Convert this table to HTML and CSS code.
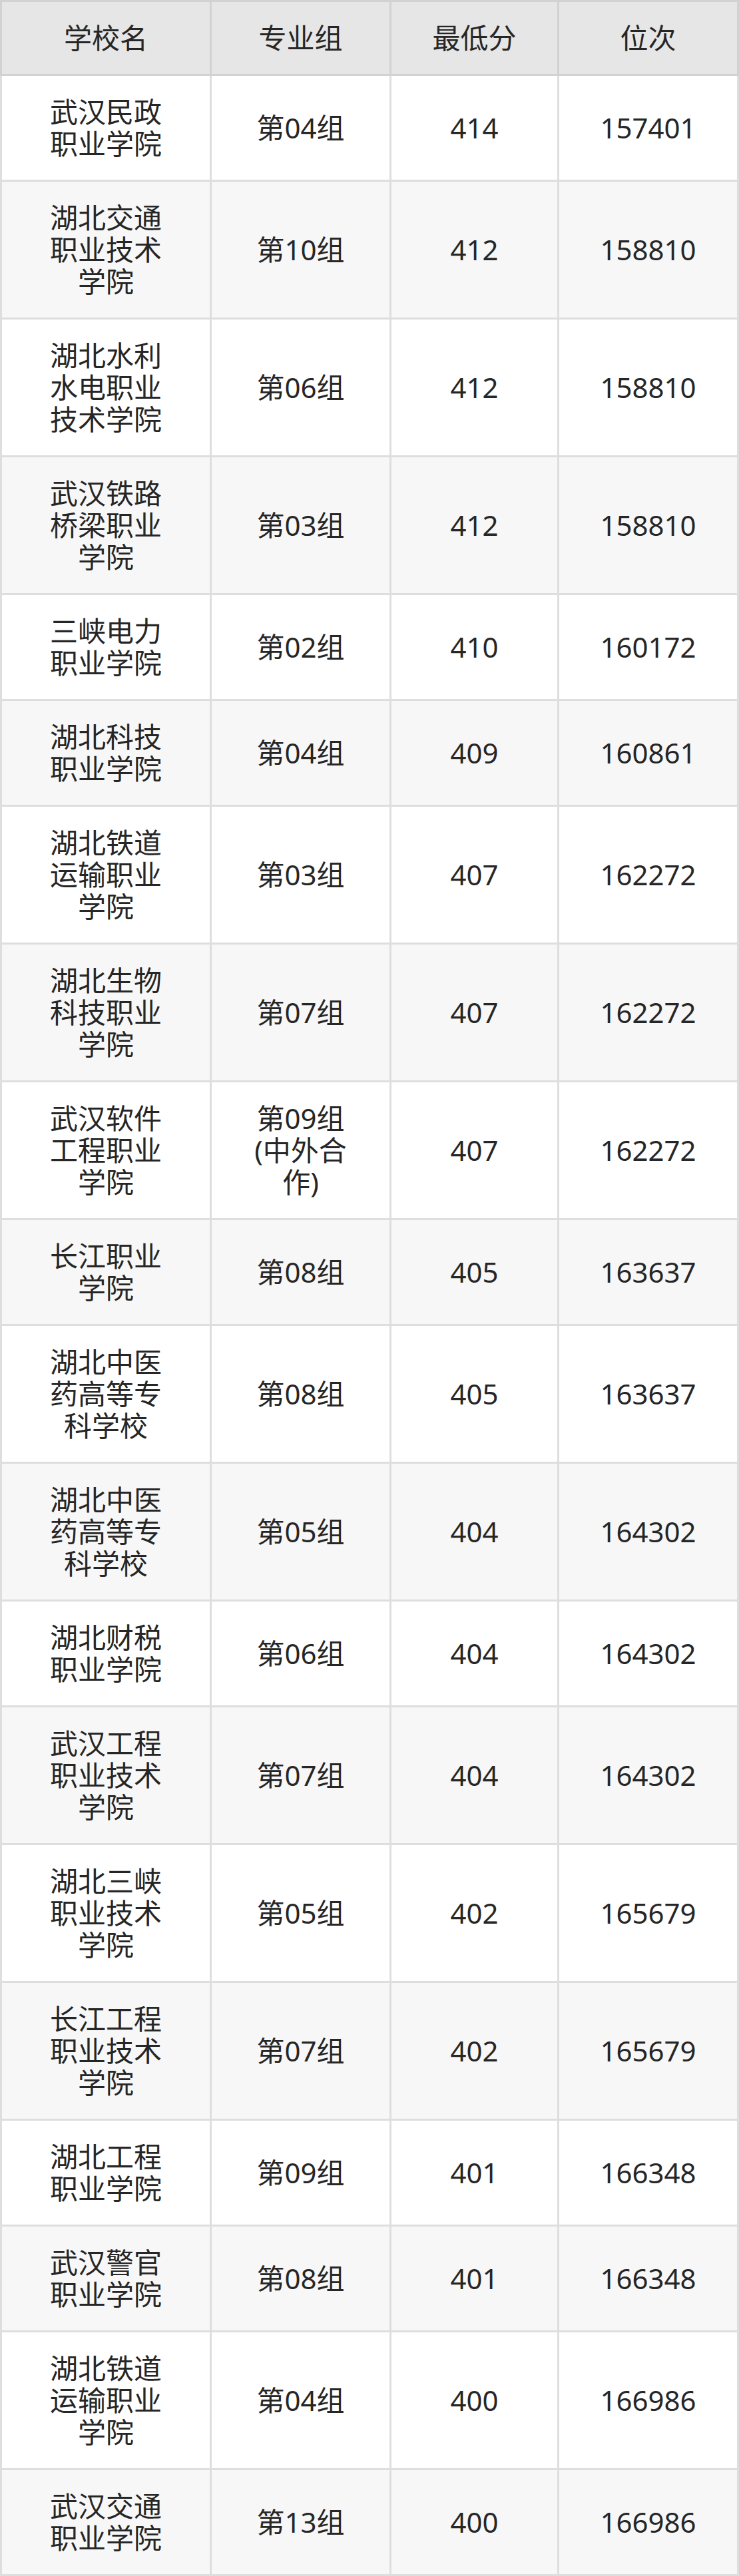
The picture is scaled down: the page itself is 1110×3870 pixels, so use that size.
FILE: index.html
```html
<!DOCTYPE html>
<html lang="zh-CN">
<head>
<meta charset="utf-8">
<title>录取分数</title>
<link rel="stylesheet" href="styles.css">
</head>
<body>
<table class="score-table">
  <colgroup>
    <col class="c-school">
    <col class="c-group">
    <col class="c-score">
    <col class="c-rank">
  </colgroup>
  <thead>
    <tr><th>学校名</th><th>专业组</th><th>最低分</th><th>位次</th></tr>
  </thead>
  <tbody>
    <tr><td>武汉民政职业学院</td><td>第04组</td><td>414</td><td>157401</td></tr>
    <tr><td>湖北交通职业技术学院</td><td>第10组</td><td>412</td><td>158810</td></tr>
    <tr><td>湖北水利水电职业技术学院</td><td>第06组</td><td>412</td><td>158810</td></tr>
    <tr><td>武汉铁路桥梁职业学院</td><td>第03组</td><td>412</td><td>158810</td></tr>
    <tr><td>三峡电力职业学院</td><td>第02组</td><td>410</td><td>160172</td></tr>
    <tr><td>湖北科技职业学院</td><td>第04组</td><td>409</td><td>160861</td></tr>
    <tr><td>湖北铁道运输职业学院</td><td>第03组</td><td>407</td><td>162272</td></tr>
    <tr><td>湖北生物科技职业学院</td><td>第07组</td><td>407</td><td>162272</td></tr>
    <tr><td>武汉软件工程职业学院</td><td>第09组(中外合作)</td><td>407</td><td>162272</td></tr>
    <tr><td>长江职业学院</td><td>第08组</td><td>405</td><td>163637</td></tr>
    <tr><td>湖北中医药高等专科学校</td><td>第08组</td><td>405</td><td>163637</td></tr>
    <tr><td>湖北中医药高等专科学校</td><td>第05组</td><td>404</td><td>164302</td></tr>
    <tr><td>湖北财税职业学院</td><td>第06组</td><td>404</td><td>164302</td></tr>
    <tr><td>武汉工程职业技术学院</td><td>第07组</td><td>404</td><td>164302</td></tr>
    <tr><td>湖北三峡职业技术学院</td><td>第05组</td><td>402</td><td>165679</td></tr>
    <tr><td>长江工程职业技术学院</td><td>第07组</td><td>402</td><td>165679</td></tr>
    <tr><td>湖北工程职业学院</td><td>第09组</td><td>401</td><td>166348</td></tr>
    <tr><td>武汉警官职业学院</td><td>第08组</td><td>401</td><td>166348</td></tr>
    <tr><td>湖北铁道运输职业学院</td><td>第04组</td><td>400</td><td>166986</td></tr>
    <tr><td>武汉交通职业学院</td><td>第13组</td><td>400</td><td>166986</td></tr>
  </tbody>
</table>
</body>
</html>
```
FILE: styles.css
```css
html, body {
  margin: 0;
  padding: 0;
  background: #ffffff;
}

.score-table {
  width: 1110px;
  table-layout: fixed;
  border-collapse: collapse;
  font-family: "Noto Sans", "Noto Sans CJK SC", sans-serif;
  font-size: 42px;
  line-height: 48px;
  color: #262626;
}

.c-school { width: 315px; }
.c-group { width: 270px; }
.c-score { width: 252px; }
.c-rank { width: 270px; }

.score-table th,
.score-table td {
  padding: 30px 60px;
  text-align: center;
  vertical-align: middle;
  font-weight: normal;
}

.score-table th {
  background: #e6e6e6;
  border: 3px solid #d2d2d2;
}

.score-table td {
  border: 3px solid #dedede;
}

.score-table tbody tr:nth-child(odd) {
  background: #ffffff;
}

.score-table tbody tr:nth-child(even) {
  background: #f7f7f7;
}
```
